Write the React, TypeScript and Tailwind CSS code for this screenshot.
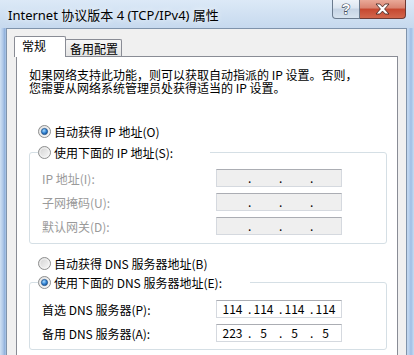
const Radio = ({ checked }: { checked?: boolean }) => (
  <svg width="13" height="13" viewBox="0 0 13 13" className="shrink-0">
    <defs>
      <linearGradient id="rb-bg" x1="0" y1="0" x2="1" y2="1">
        <stop offset="0" stopColor="#cfcfcf" />
        <stop offset="1" stopColor="#fbfbfb" />
      </linearGradient>
      <radialGradient id="rb-dot" cx="0.4" cy="0.35" r="0.75">
        <stop offset="0" stopColor="#a8dcff" />
        <stop offset="0.55" stopColor="#2f80d2" />
        <stop offset="1" stopColor="#14457f" />
      </radialGradient>
    </defs>
    <circle cx="6.5" cy="6.5" r="6" fill="url(#rb-bg)" stroke="#8e8f8f" />
    <circle cx="6.5" cy="6.5" r="4.6" fill="none" stroke="#f6f6f6" strokeWidth="0.8" />
    {checked && <circle cx="6.5" cy="6.5" r="3.1" fill="url(#rb-dot)" stroke="#1d4f86" strokeWidth="0.7" />}
  </svg>
);

const IpBox = ({ parts, disabled }: { parts: string[]; disabled?: boolean }) => (
  <div
    className={`flex h-[18px] w-[126px] shrink-0 items-center border border-[#d5d9df] border-t-[#abadb3] text-[12px] leading-[12px] text-black ${
      disabled ? 'bg-[#efefef]' : 'bg-white'
    }`}
  >
    {parts.map((p, i) => (
      <div key={i} className="flex h-full w-[31px] items-center">
        {i > 0 && <span className="w-[4px] shrink-0">.</span>}
        <span className={i === 0 ? 'w-[31px] text-center' : 'w-[23px] text-center'}>{p}</span>
      </div>
    ))}
  </div>
);

const Row = ({ label, parts, disabled }: { label: string; parts: string[]; disabled?: boolean }) => (
  <div className="flex h-[18px] items-center pl-[4px]">
    <span className={`w-[174px] ${disabled ? 'text-[#9a9a9a]' : 'text-black'}`}>{label}</span>
    <IpBox parts={parts} disabled={disabled} />
  </div>
);

const App = () => {
  return (
    <div className="flex h-[355px] w-[414px] flex-col overflow-hidden font-['Noto_Sans_CJK_SC',sans-serif] text-[12px] leading-[13px] text-black">
      {/* title bar */}
      <div className="flex h-[28px] shrink-0 items-start justify-between bg-[linear-gradient(to_bottom,#dce9f7,#c6d9ee)]">
        <span className="pl-[8px] pt-[7px] font-['Noto_Sans','Noto_Sans_CJK_SC',sans-serif] text-[13px] leading-[16px] text-black [text-shadow:0_0_6px_#ffffff]">
          Internet 协议版本 4 (TCP/IPv4) 属性
        </span>
        <div className="mr-[8px] flex">
          <div className="flex h-[19px] w-[28px] items-center justify-center rounded-bl-[4px] border border-t-0 border-[#6b7b8e] bg-[linear-gradient(to_bottom,#eef3f9_0%,#dbe5f0_45%,#c5d3e4_50%,#d7e3ef_100%)] font-['Liberation_Sans',sans-serif] text-[14px] font-bold leading-[14px] text-white [-webkit-text-stroke:1.2px_#3e4c5e] [paint-order:stroke_fill]">
            ?
          </div>
          <div className="flex h-[19px] w-[46px] items-center justify-center rounded-br-[4px] border border-l-0 border-t-0 border-[#6e3a33] bg-[linear-gradient(to_bottom,#e9a998_0%,#d98370_45%,#c6472f_50%,#d2674c_100%)]">
            <svg width="15" height="12" viewBox="0 0 15 12">
              <path
                d="M1 1h3.8L7.5 3.9 10.2 1H14L9.6 6 14 11h-3.8L7.5 8.1 4.8 11H1l4.4-5z"
                fill="#ffffff"
                stroke="#4a2a26"
                strokeWidth="0.9"
                strokeLinejoin="round"
              />
            </svg>
          </div>
        </div>
      </div>

      {/* frame + client */}
      <div className="flex flex-1 bg-[linear-gradient(to_right,#cfe0f3_0px,#afc8e8_3px,#8badda_5px,#bcd3ee_6px,#bcd3ee_407px,#c3d8f0_408px,#9fbfe6_411px,#c9dcf1_414px)] pl-[6px] pr-[7px]">
        <div className="flex flex-1 flex-col border border-b-0 border-[#7f93ab] bg-[#f0f0f0]">
          {/* tabs */}
          <div className="relative z-10 -mb-[1px] flex items-end pl-[7px] pt-[7px]">
            <div className="relative z-10 h-[21px] w-[52px] rounded-t-[2px] border border-b-0 border-[#898c95] bg-white pl-[7px] pt-[2px]">
              常规
            </div>
            <div className="-ml-[1px] mb-[1px] h-[17px] w-[57px] rounded-t-[2px] border border-b-0 border-[#898c95] bg-[linear-gradient(to_bottom,#f6f6f6,#e4e4e4)] pl-[4px] pt-[2px]">
              备用配置
            </div>
          </div>

          {/* panel */}
          <div className="ml-[9px] mr-[8px] flex flex-1 flex-col border border-[#898c95] bg-white">
            <p className="pl-[12px] pt-[11px] leading-[13px]">
              如果网络支持此功能，则可以获取自动指派的 IP 设置。否则，
              <br />
              您需要从网络系统管理员处获得适当的 IP 设置。
            </p>

            <div className="mt-[31px] flex h-[13px] items-center gap-[3px] pl-[21px]">
              <Radio checked />
              <span>自动获得 IP 地址(O)</span>
            </div>

            <fieldset className="ml-[12px] mt-[8px] flex w-[358px] flex-col gap-[6px] rounded-[3px] border border-[#d5dfe5] px-[8px] pb-[8px]">
              <legend className="flex h-[13px] w-[172px] items-center gap-[3px] bg-white">
                <Radio />
                <span>使用下面的 IP 地址(S):</span>
              </legend>
              <div className="mt-[4px]" />
              <Row label="IP 地址(I):" parts={['', '', '', '']} disabled />
              <Row label="子网掩码(U):" parts={['', '', '', '']} disabled />
              <Row label="默认网关(D):" parts={['', '', '', '']} disabled />
            </fieldset>

            <div className="mt-[13px] flex h-[13px] items-center gap-[3px] pl-[21px]">
              <Radio />
              <span>自动获得 DNS 服务器地址(B)</span>
            </div>

            <fieldset className="ml-[12px] mt-[6px] flex w-[358px] flex-col gap-[6px] rounded-[3px] border border-[#d5dfe5] px-[8px] pb-[7px]">
              <legend className="flex h-[13px] w-[212px] items-center gap-[3px] bg-white">
                <Radio checked />
                <span>使用下面的 DNS 服务器地址(E):</span>
              </legend>
              <div className="mt-[5px]" />
              <Row label="首选 DNS 服务器(P):" parts={['114', '114', '114', '114']} />
              <Row label="备用 DNS 服务器(A):" parts={['223', '5', '5', '5']} />
            </fieldset>

            <div className="ml-[25px] mt-[15px] h-[13px] w-[13px] border border-[#8e8f8f] bg-[linear-gradient(to_bottom_right,#dcdcdc,#fbfbfb)]" />
          </div>
        </div>
      </div>
    </div>
  );
};

export default App;
